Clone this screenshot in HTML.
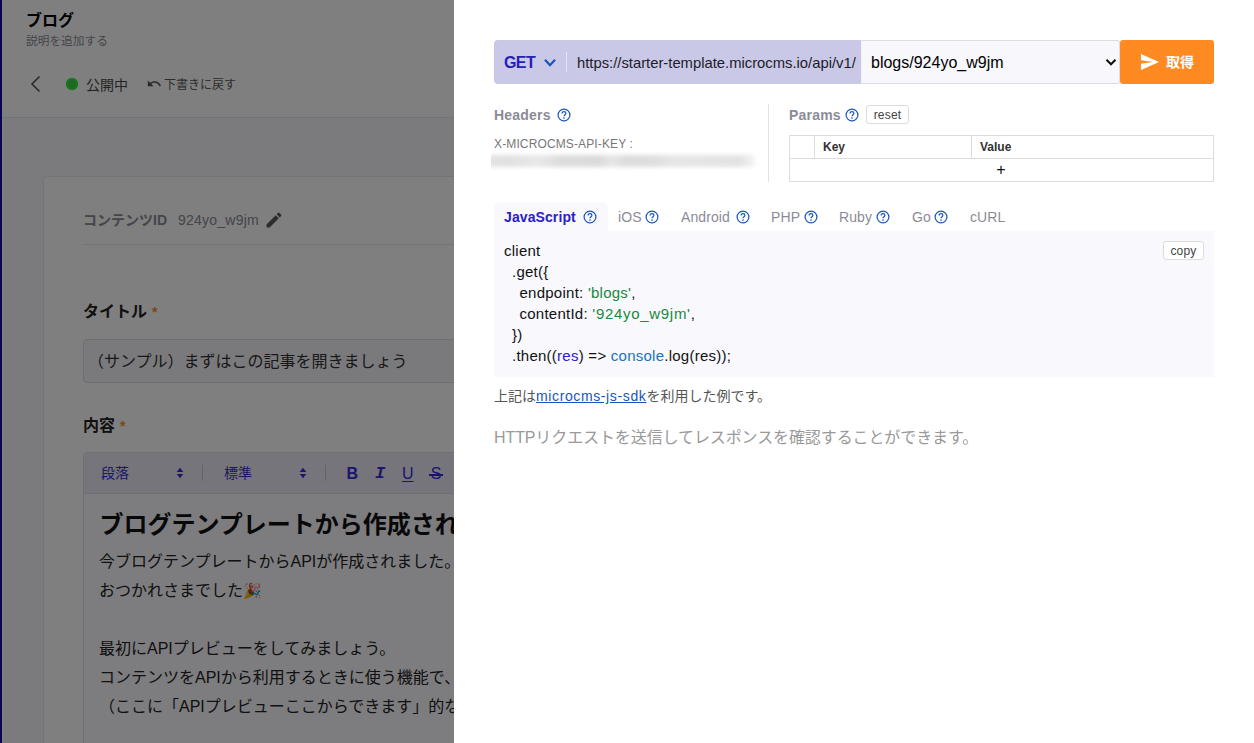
<!DOCTYPE html>
<html lang="ja">
<head>
<meta charset="utf-8">
<title>microCMS API Preview</title>
<style>
*{box-sizing:border-box;margin:0;padding:0}
html,body{width:1254px;height:743px;overflow:hidden;background:#fff}
body{font-family:"Liberation Sans","Noto Sans CJK JP",sans-serif;color:#21213b;position:relative}
.abs{position:absolute;white-space:nowrap}
/* ---------- background page ---------- */
#bg{position:absolute;left:0;top:0;width:1254px;height:743px;background:#f7f7fa;overflow:hidden}
#side{position:absolute;left:0;top:0;width:2px;height:743px;background:#140aa0;box-shadow:2px 0 0 #fff}
#hdr{position:absolute;left:2px;top:0;width:1252px;height:118px;background:#fff;border-bottom:1px solid #e5e5f2}
#card{position:absolute;left:43px;top:176px;width:1200px;height:700px;background:#fff;border:1px solid #e5e5f2;border-radius:5px}
#overlay{position:absolute;left:0;top:0;width:454px;height:743px;background:rgba(0,0,0,.5)}
.tb{font-size:14px;line-height:20px;color:#3a2ad8}
.p{font-size:16px;line-height:29px;color:#222}
/* ---------- drawer ---------- */
#drawer{position:absolute;left:454px;top:0;width:800px;height:743px;background:#fff}
.lbl{letter-spacing:.2px;font-size:14px;font-weight:bold;line-height:20px;color:#8b8b98}
.th{font-size:12px;font-weight:bold;line-height:16px;color:#333}
.tab{letter-spacing:.1px;font-size:14px;line-height:20px;color:#8b8b98}
pre.abs{white-space:pre;font-family:"Liberation Sans","Noto Sans CJK JP",sans-serif;font-size:15px;line-height:21px;color:#111}
pre .l{letter-spacing:.25px}
pre .s{color:#1a8a3c}pre .v{color:#2b20c8}pre .c{color:#1a73b8}
</style>
</head>
<body>
<div id="bg">
  <div id="side"></div>
  <div id="hdr"></div>
  <div class="abs" id="t-blog" style="left:26px;top:10px;font-size:16px;font-weight:bold;line-height:22px;color:#000">ブログ</div>
  <div class="abs" id="t-desc" style="left:26px;top:33px;font-size:11.700px;line-height:16px;color:#8b8b98">説明を追加する</div>
  <svg class="abs" style="left:29px;top:75px" width="14" height="18" viewBox="0 0 14 18"><path d="M10.5 1.5 L3 9 L10.5 16.5" fill="none" stroke="#555" stroke-width="1.6"/></svg>
  <div class="abs" style="left:66px;top:78px;width:12px;height:12px;border-radius:50%;background:#38d44c;box-shadow:inset 0 0 0 1.500px #2cf02c"></div>
  <div class="abs" id="t-pub" style="left:86px;top:74.500px;font-size:14px;line-height:20px;color:#484848">公開中</div>
  <svg class="abs" style="left:145.500px;top:76px" width="16.500" height="15.500" viewBox="0 0 24 24"><path d="M12.5 8c-2.65 0-5.05.99-6.9 2.6L2 7v9h9l-3.62-3.620c1.390-1.160 3.160-1.880 5.120-1.880 3.540 0 6.550 2.310 7.600 5.500l2.370-.780C21.080 11.030 17.150 8 12.500 8z" fill="#555"/></svg>
  <div class="abs" id="t-draft" style="left:164px;top:76.500px;font-size:12px;line-height:16px;color:#5a5a5a">下書きに戻す</div>
  <div id="card"></div>
  <div class="abs" id="t-cid" style="left:83px;top:210px;font-size:14px;font-weight:bold;line-height:20px;color:#8a8a94">コンテンツID</div>
  <div class="abs" id="t-cidv" style="left:178px;top:210px;font-size:14px;letter-spacing:.24px;line-height:20px;color:#8a8a94">924yo_w9jm</div>
  <svg class="abs" style="left:264px;top:210px" width="20" height="20" viewBox="0 0 24 24"><path d="M3 17.250V21h3.750L17.810 9.940l-3.750-3.750L3 17.250zM20.710 7.040a.996.996 0 0 0 0-1.410l-2.340-2.340a.996.996 0 0 0-1.410 0l-1.830 1.830 3.750 3.750 1.830-1.830z" fill="#5a5a5a"/></svg>
  <div class="abs" style="left:83px;top:244px;width:1100px;height:1px;background:#e5e5f2"></div>
  <div class="abs" id="t-title" style="left:83px;top:301px;font-size:16px;font-weight:bold;line-height:22px;color:#222">タイトル<span style="color:#ff8a1f;margin-left:5px;font-size:14px">*</span></div>
  <div class="abs" style="left:83px;top:339px;width:1100px;height:44px;border:1px solid #dddde2;border-radius:4px;background:#f4f4f8"></div>
  <div class="abs" id="t-input" style="left:88px;top:351px;font-size:16px;line-height:22px;color:#333">（サンプル）まずはこの記事を開きましょう</div>
  <div class="abs" id="t-body" style="left:83px;top:415px;font-size:16px;font-weight:bold;line-height:22px;color:#222">内容<span style="color:#ff8a1f;margin-left:5px;font-size:14px">*</span></div>
  <div class="abs" style="left:83px;top:452px;width:1100px;height:400px;border:1px solid #dcdce6;border-radius:4px 4px 0 0;background:#fafafe"></div>
  <div class="abs" style="left:84px;top:453px;width:1098px;height:41px;background:#eaeaf6;border-bottom:1px solid #dcdce6"></div>
  <div class="abs tb" id="t-dan" style="left:101px;top:463px">段落</div>
  <svg class="abs" style="left:176px;top:467px" width="8" height="12" viewBox="0 0 8 12"><path d="M4 .8 L7.300 5 H.7Z M4 11.200 L7.300 7 H.7Z" fill="#3a2ad8"/></svg>
  <div class="abs" style="left:202px;top:465px;width:1px;height:16px;background:#c4c4d0"></div>
  <div class="abs tb" id="t-hyo" style="left:224px;top:463px">標準</div>
  <svg class="abs" style="left:299px;top:467px" width="8" height="12" viewBox="0 0 8 12"><path d="M4 .8 L7.300 5 H.7Z M4 11.200 L7.300 7 H.7Z" fill="#3a2ad8"/></svg>
  <div class="abs" style="left:325px;top:465px;width:1px;height:16px;background:#c4c4d0"></div>
  <div class="abs tb" style="left:346.500px;top:463px;font-weight:bold;font-size:16px;line-height:22px;-webkit-text-stroke:.2px #fff0">B</div>
  <div class="abs tb" style="left:375px;top:463px;font-style:italic;font-size:17px;line-height:22px;font-family:'Liberation Mono',monospace;font-weight:bold">I</div>
  <div class="abs tb" style="left:402px;top:463px;text-decoration:underline;text-underline-offset:2px;font-size:16px;line-height:22px">U</div>
  <div class="abs tb" style="left:429px;top:463px;font-size:16px;line-height:22px;width:14px;text-align:center">S<span style="position:absolute;left:0;top:11px;width:14px;height:1.500px;background:#3a2ad8"></span></div>
  <div class="abs" id="t-h1" style="left:99.5px;top:508px;font-size:24px;font-weight:bold;line-height:34px;color:#111">ブログテンプレートから作成されました</div>
  <div class="abs p" id="t-p1" style="left:99px;top:547px">今ブログテンプレートからAPIが作成されました。</div>
  <div class="abs p" id="t-p2" style="left:99px;top:576px">おつかれさまでした<span style="font-size:15px">🎉</span></div>
  <div class="abs p" id="t-p3" style="left:99px;top:634px">最初にAPIプレビューをしてみましょう。</div>
  <div class="abs p" id="t-p4" style="left:99px;top:663px">コンテンツをAPIから利用するときに使う機能で、</div>
  <div class="abs p" id="t-p5" style="left:99px;top:692px">（ここに「APIプレビューここからできます」的な画像）</div>
</div>
<div id="overlay"></div>
<div id="drawer">
  <div class="abs" style="left:40px;top:40px;width:367px;height:44px;background:#c9c8e6;border-radius:4px 0 0 4px"></div>
  <div class="abs" id="r-get" style="left:50px;top:52px;letter-spacing:-.6px;font-size:16px;font-weight:bold;line-height:22px;color:#2420b8">GET</div>
  <svg class="abs" style="left:89px;top:57.500px" width="14" height="10" viewBox="0 0 14 10"><path d="M2 1.800 L7 7.200 L12 1.800" fill="none" stroke="#1756b8" stroke-width="2.200"/></svg>
  <div class="abs" style="left:112px;top:52px;width:1px;height:20px;background:#e4e4f4"></div>
  <div class="abs" id="r-url" style="left:123px;top:53px;font-size:14.8px;line-height:20px;color:#1c1c2a">https://starter-template.microcms.io/api/v1/</div>
  <div class="abs" style="left:407px;top:40px;width:259px;height:44px;background:#f7f7fc;border:1px solid #dcdcdc;border-left-color:#f0f0f6;border-radius:0 3px 3px 0"></div>
  <div class="abs" id="r-sel" style="left:417px;top:52px;font-size:16px;line-height:22px;color:#000">blogs/924yo_w9jm</div>
  <svg class="abs" style="left:651px;top:58px" width="12" height="9" viewBox="0 0 12 9"><path d="M1.500 1.800 L6 6.300 L10.500 1.800" fill="none" stroke="#111" stroke-width="2"/></svg>
  <div class="abs" style="left:666px;top:40px;width:94px;height:44px;background:#ff8a22;border-radius:3px"></div>
  <svg class="abs" style="left:687px;top:54px" width="18" height="16" viewBox="0 0 18 16"><path d="M0 0 L18 8 L0 16 L0 9.800 L12 8 L0 6.200 Z" fill="#fff"/></svg>
  <div class="abs" id="r-btn" style="left:712px;top:52px;font-size:14px;font-weight:bold;line-height:20px;color:#fff">取得</div>

  <div class="abs lbl" id="r-headers" style="left:40px;top:105px">Headers</div>
  <svg class="abs q" style="left:103px;top:108px" width="14" height="14" viewBox="0 0 14 14"><circle cx="7" cy="7" r="5.9" fill="none" stroke="#1756b8" stroke-width="1.2"/><path d="M5.100 5.600 C5.100 4.400 6 3.700 7 3.700 C8.100 3.700 8.900 4.400 8.900 5.400 C8.900 6.600 7 6.800 7 8.200" fill="none" stroke="#1756b8" stroke-width="1.2"/><circle cx="7" cy="10.100" r=".8" fill="#1756b8"/></svg>
  <div class="abs" id="r-key" style="left:40px;top:136px;letter-spacing:.13px;font-size:12px;line-height:16px;color:#777">X-MICROCMS-API-KEY :</div>
  <div class="abs" style="left:37px;top:152px;width:268px;height:18px;overflow:hidden"><div style="position:absolute;left:-6px;top:3px;width:270px;height:12px;filter:blur(2.200px);background:linear-gradient(90deg,#e4e4e4 0,#e0e0e0 8%,#e8e8e8 20%,#dcdcdc 28%,#dadada 42%,#e6e6e6 47%,#dcdcdc 52%,#dedede 62%,#e6e6e6 70%,#e4e4e4 85%,#e2e2e2 94%,#f4f4f4 100%)"></div></div>
  <div class="abs" style="left:314px;top:104px;width:1px;height:78px;background:#e2e2e6"></div>
  <div class="abs lbl" id="r-params" style="left:335px;top:105px">Params</div>
  <svg class="abs q" style="left:391px;top:108px" width="14" height="14" viewBox="0 0 14 14"><circle cx="7" cy="7" r="5.9" fill="none" stroke="#1756b8" stroke-width="1.2"/><path d="M5.100 5.600 C5.100 4.400 6 3.700 7 3.700 C8.100 3.700 8.900 4.400 8.900 5.400 C8.900 6.600 7 6.800 7 8.200" fill="none" stroke="#1756b8" stroke-width="1.2"/><circle cx="7" cy="10.100" r=".8" fill="#1756b8"/></svg>
  <div class="abs" id="r-reset" style="left:412px;top:105px;width:43px;height:19px;border:1px solid #dcdcdc;border-radius:3px;font-size:12px;line-height:19px;letter-spacing:.2px;text-align:center;color:#444">reset</div>
  <div class="abs" style="left:335px;top:135px;width:425px;height:47px;border:1px solid #dcdcdc"></div>
  <div class="abs" style="left:335px;top:158px;width:425px;height:1px;background:#dcdcdc"></div>
  <div class="abs" style="left:360px;top:135px;width:1px;height:23px;background:#dcdcdc"></div>
  <div class="abs" style="left:517px;top:135px;width:1px;height:23px;background:#dcdcdc"></div>
  <div class="abs th" id="r-k" style="left:369px;top:139px">Key</div>
  <div class="abs th" id="r-v" style="left:526px;top:139px">Value</div>
  <div class="abs" id="r-plus" style="left:541px;top:160px;font-size:16px;line-height:20px;color:#111;width:12px;text-align:center">+</div>

  <div class="abs" style="left:40px;top:202px;width:114px;height:30px;background:#f8f8fd;border-radius:6px 6px 0 0"></div>
  <div class="abs" style="left:40px;top:231px;width:720px;height:146px;background:#f8f8fd"></div>
  <div class="abs tab" id="r-js" style="left:50px;top:207px;font-weight:bold;color:#2b20c8">JavaScript</div>
  <svg class="abs q" style="left:129px;top:210px" width="14" height="14" viewBox="0 0 14 14"><circle cx="7" cy="7" r="5.9" fill="none" stroke="#1756b8" stroke-width="1.2"/><path d="M5.100 5.600 C5.100 4.400 6 3.700 7 3.700 C8.100 3.700 8.900 4.400 8.900 5.400 C8.900 6.600 7 6.800 7 8.200" fill="none" stroke="#1756b8" stroke-width="1.2"/><circle cx="7" cy="10.100" r=".8" fill="#1756b8"/></svg>
  <div class="abs tab" id="r-ios" style="left:164px;top:207px">iOS</div>
  <svg class="abs q" style="left:191px;top:210px" width="14" height="14" viewBox="0 0 14 14"><circle cx="7" cy="7" r="5.9" fill="none" stroke="#1756b8" stroke-width="1.2"/><path d="M5.100 5.600 C5.100 4.400 6 3.700 7 3.700 C8.100 3.700 8.900 4.400 8.900 5.400 C8.900 6.600 7 6.800 7 8.200" fill="none" stroke="#1756b8" stroke-width="1.2"/><circle cx="7" cy="10.100" r=".8" fill="#1756b8"/></svg>
  <div class="abs tab" id="r-and" style="left:227px;top:207px">Android</div>
  <svg class="abs q" style="left:282px;top:210px" width="14" height="14" viewBox="0 0 14 14"><circle cx="7" cy="7" r="5.9" fill="none" stroke="#1756b8" stroke-width="1.2"/><path d="M5.100 5.600 C5.100 4.400 6 3.700 7 3.700 C8.100 3.700 8.900 4.400 8.900 5.400 C8.900 6.600 7 6.800 7 8.200" fill="none" stroke="#1756b8" stroke-width="1.2"/><circle cx="7" cy="10.100" r=".8" fill="#1756b8"/></svg>
  <div class="abs tab" id="r-php" style="left:317px;top:207px">PHP</div>
  <svg class="abs q" style="left:350px;top:210px" width="14" height="14" viewBox="0 0 14 14"><circle cx="7" cy="7" r="5.9" fill="none" stroke="#1756b8" stroke-width="1.2"/><path d="M5.100 5.600 C5.100 4.400 6 3.700 7 3.700 C8.100 3.700 8.900 4.400 8.900 5.400 C8.900 6.600 7 6.800 7 8.200" fill="none" stroke="#1756b8" stroke-width="1.2"/><circle cx="7" cy="10.100" r=".8" fill="#1756b8"/></svg>
  <div class="abs tab" id="r-ruby" style="left:385px;top:207px">Ruby</div>
  <svg class="abs q" style="left:422px;top:210px" width="14" height="14" viewBox="0 0 14 14"><circle cx="7" cy="7" r="5.9" fill="none" stroke="#1756b8" stroke-width="1.2"/><path d="M5.100 5.600 C5.100 4.400 6 3.700 7 3.700 C8.100 3.700 8.900 4.400 8.900 5.400 C8.900 6.600 7 6.800 7 8.200" fill="none" stroke="#1756b8" stroke-width="1.2"/><circle cx="7" cy="10.100" r=".8" fill="#1756b8"/></svg>
  <div class="abs tab" id="r-go" style="left:458px;top:207px">Go</div>
  <svg class="abs q" style="left:480px;top:210px" width="14" height="14" viewBox="0 0 14 14"><circle cx="7" cy="7" r="5.9" fill="none" stroke="#1756b8" stroke-width="1.2"/><path d="M5.100 5.600 C5.100 4.400 6 3.700 7 3.700 C8.100 3.700 8.900 4.400 8.900 5.400 C8.900 6.600 7 6.800 7 8.200" fill="none" stroke="#1756b8" stroke-width="1.2"/><circle cx="7" cy="10.100" r=".8" fill="#1756b8"/></svg>
  <div class="abs tab" id="r-curl" style="left:516px;top:207px">cURL</div>
  <pre class="abs" id="r-code" style="left:50px;top:240px"><span class="l">client</span>
<span class="l" style="padding-left:8px">.get({</span>
<span class="l" style="padding-left:15.500px">endpoint: <span class="s">'blogs'</span>,</span>
<span class="l" style="padding-left:15.500px">contentId: <span class="s" style="letter-spacing:.7px">'924yo_w9jm'</span>,</span>
<span class="l" style="padding-left:8px">})</span>
<span class="l" style="padding-left:8px">.then((<span class="v">res</span>) =&gt; <span class="c">console</span>.log(res));</span></pre>
  <div class="abs" id="r-copy" style="left:709px;top:241px;width:41px;height:19px;border:1px solid #dcdcdc;border-radius:3px;background:#fff;font-size:12px;line-height:19px;letter-spacing:.2px;text-align:center;color:#444">copy</div>
  <div class="abs" id="r-note" style="left:40px;top:386px;font-size:14px;line-height:20px;color:#555">上記は<span style="color:#1756b8;text-decoration:underline;letter-spacing:.62px">microcms-js-sdk</span>を利用した例です。</div>
  <div class="abs" id="r-http" style="left:40px;top:427px;letter-spacing:-.1px;font-size:16px;line-height:22px;color:#999">HTTPリクエストを送信してレスポンスを確認することができます。</div>
</div>
</body>
</html>
